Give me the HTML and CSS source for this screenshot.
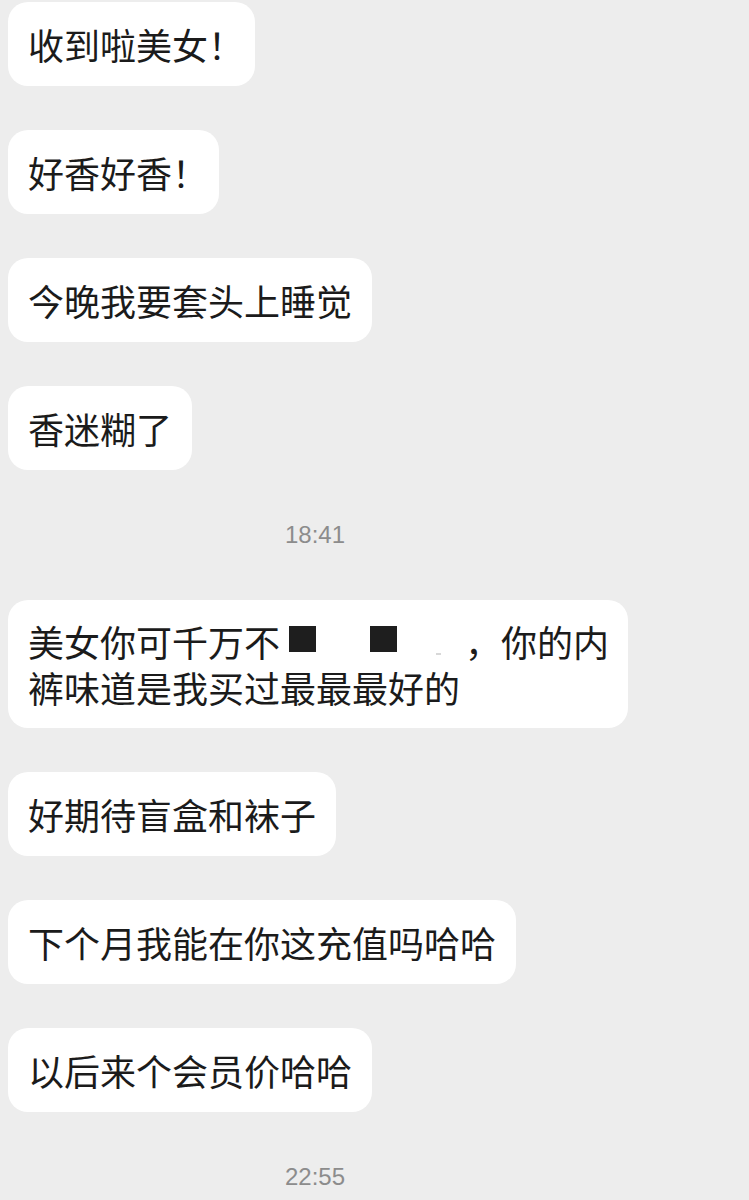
FILE: index.html
```html
<!DOCTYPE html>
<html lang="zh-CN">
<head>
<meta charset="utf-8">
<link rel="stylesheet" href="styles.css">
</head>
<body>
<div class="chat">
  <div class="bubble">收到啦美女<span class="bang">！</span></div>
  <div class="bubble">好香好香<span class="bang">！</span></div>
  <div class="bubble">今晚我要套头上睡觉</div>
  <div class="bubble">香迷糊了</div>
  <div class="time">18:41</div>
  <div class="bubble wide">美女你可千万不<span class="redact"><span class="sq"></span><span class="sq"></span><span class="dash"></span></span>，你的内<br>裤味道是我买过最最最好的</div>
  <div class="bubble">好期待盲盒和袜子</div>
  <div class="bubble">下个月我能在你这充值吗哈哈</div>
  <div class="bubble">以后来个会员价哈哈</div>
  <div class="time">22:55</div>
</div>
</body>
</html>
```

FILE: styles.css
```css
html, body {
  margin: 0;
  padding: 0;
  background: #ededed;
}

.chat {
  display: flex;
  flex-direction: column;
  align-items: flex-start;
  gap: 44px;
  padding: 2px 0 0 8px;
}

.bubble {
  background: #ffffff;
  border-radius: 20px;
  padding: 19px 20px;
  font-family: "Noto Sans CJK SC", "Noto Sans", sans-serif;
  font-size: 36px;
  line-height: 46px;
  color: #1b1b1b;
}

.bubble.wide {
  width: 580px;
  padding: 18px 20px;
  white-space: nowrap;
}

.bang {
  letter-spacing: -9px;
}

.redact {
  display: inline-flex;
  align-items: center;
  width: 185px;
  height: 46px;
  vertical-align: top;
  padding-left: 9px;
  gap: 54px;
  position: relative;
  box-sizing: border-box;
}

.sq {
  width: 27px;
  height: 26px;
  background: #1e1e1e;
  margin-top: -4px;
}

.dash {
  position: absolute;
  left: 156px;
  top: 35px;
  width: 5px;
  height: 2px;
  background: #d8d8d8;
}

.time {
  width: 614px;
  height: 42px;
  line-height: 42px;
  text-align: center;
  font-family: "Liberation Sans", Arial, sans-serif;
  font-size: 24px;
  color: #8c8c8c;
}
```
